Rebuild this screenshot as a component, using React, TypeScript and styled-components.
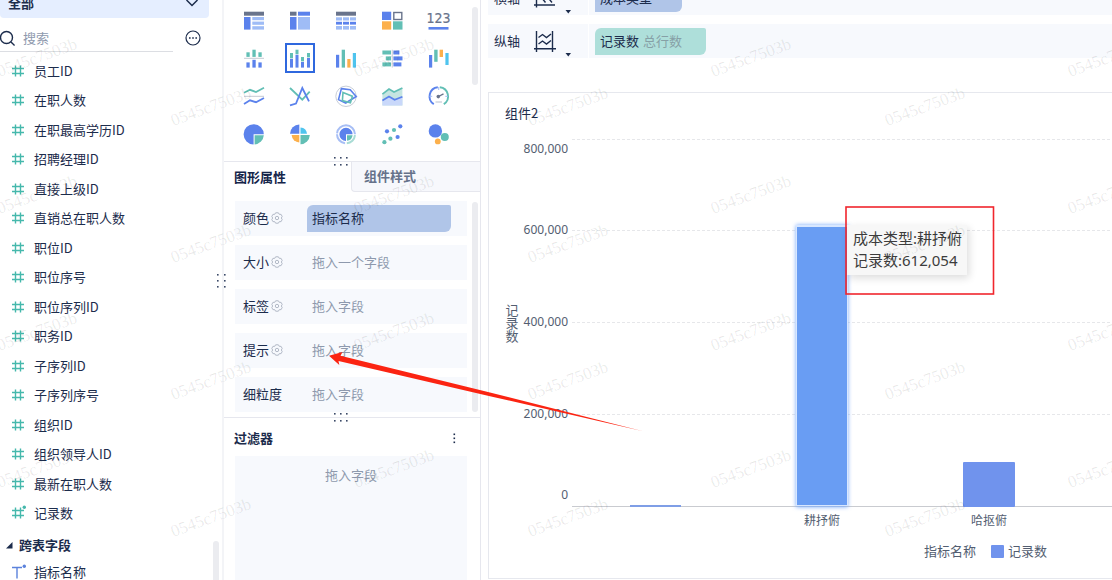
import React from "react";
import styled, { createGlobalStyle } from "styled-components";

const BLUE = "#5b82ec";
const LIGHT = "#9fbcf6";
const TEAL = "#62bfb5";
const ORANGE = "#fcb04c";
const CYAN = "#4fc4ee";
const GRAY = "#69748c";
const INK = "#1c2c4c";

const Global = createGlobalStyle`
  * { box-sizing: border-box; }
  body {
    margin: 0;
    background: #fff;
    color: ${INK};
    font-family: "Noto Sans CJK SC", sans-serif;
    font-size: 13px;
    line-height: 20px;
  }
  button, input { font: inherit; color: inherit; border: 0; background: none; padding: 0; }
  ul { list-style: none; margin: 0; padding: 0; }
  h2, h3, p { margin: 0; font-size: 13px; font-weight: 700; }
`;

const Page = styled.div`
  position: relative;
  display: flex;
  height: 100vh;
  overflow: hidden;
`;

const FieldPanel = styled.aside`
  position: relative;
  flex: 0 0 222px;
  overflow: hidden;
`;

const TableSelect = styled.button`
  display: flex;
  align-items: center;
  justify-content: space-between;
  width: 209px;
  height: 30px;
  margin-top: -12px;
  padding: 0 10px 0 8px;
  border-radius: 4px;
  background: #e5eeff;
  font-weight: 700;
`;

const SearchRow = styled.div`
  display: flex;
  align-items: center;
  gap: 12px;
  height: 40px;
`;

const SearchLabel = styled.label`
  display: flex;
  align-items: center;
  gap: 8px;
  width: 173px;
  height: 28px;
  border-bottom: 1px solid #dcdee3;
`;

const SearchInput = styled.input`
  flex: 1;
  min-width: 0;
  outline: 0;
  &::placeholder { color: #8f9aae; opacity: 1; }
`;

const IconButton = styled.button`
  display: flex;
  align-items: center;
  justify-content: center;
`;

const FieldList = styled.ul`
  display: grid;
  grid-auto-rows: 1fr;
  height: 472px;
  margin-top: -2px;
`;

const Field = styled.li`
  display: flex;
  align-items: center;
  gap: 7px;
  padding-left: 10px;
`;

const GroupTitle = styled.h3`
  display: flex;
  align-items: center;
  gap: 6px;
  height: 24px;
  margin-top: 5px;
  padding-left: 6px;
`;

const LastField = styled.div`
  display: flex;
  align-items: center;
  gap: 7px;
  height: 30px;
  padding-left: 10px;
`;

const Thumb = styled.div<{ $top: number; $height: number; $right: number }>`
  position: absolute;
  top: ${(p) => p.$top}px;
  right: ${(p) => p.$right}px;
  width: 6px;
  height: ${(p) => p.$height}px;
  border-radius: 3px;
  background: #ebecf0;
`;

const ConfigPanel = styled.section`
  position: relative;
  flex: 0 0 259px;
  display: flex;
  flex-direction: column;
  border-left: 2px solid #f3f4f7;
  border-right: 1px solid #e6e7ee;
`;

const SideGrip = styled.div`
  position: absolute;
  z-index: 2;
  left: -8px;
  top: 273px;
  display: flex;
`;

const ChartTypes = styled.div`
  position: relative;
  display: grid;
  grid-template-columns: repeat(5, 46px);
  grid-auto-rows: 38px;
  place-items: center;
  height: 162px;
  align-content: start;
  padding: 1px 0 0 7px;
  border-bottom: 1px solid #e6e7ee;
`;

const ChartType = styled.button<{ $active?: boolean }>`
  display: flex;
  align-items: center;
  justify-content: center;
  width: 30px;
  height: 30px;
  border: ${(p) => (p.$active ? "2px solid #2f68de" : "0")};
`;

const Grip = styled.div`
  position: absolute;
  z-index: 2;
  left: 50%;
  bottom: -5px;
  display: flex;
  margin-left: -19px;
`;

const Tabs = styled.div`
  display: flex;
  height: 30px;
`;

const Tab = styled.button<{ $active?: boolean }>`
  flex: ${(p) => (p.$active ? "0 0 127px" : "1")};
  padding: 0 0 1px ${(p) => (p.$active ? 10 : 12)}px;
  text-align: left;
  font-weight: 700;
  color: ${(p) => (p.$active ? "#15254a" : "#66728a")};
  background: ${(p) => (p.$active ? "#fff" : "#f7f8fc")};
  border: ${(p) => (p.$active ? "0" : "1px solid #e6e7ee")};
  border-top: 0;
  border-right: 0;
  border-bottom-left-radius: 4px;
`;

const Attributes = styled.div`
  position: relative;
  display: flex;
  flex-direction: column;
  gap: 9px;
  height: 226px;
  padding: 9px 13px 0 11px;
  border-bottom: 1px solid #e6e7ee;
`;

const Attribute = styled.div`
  display: flex;
  align-items: center;
  height: 35px;
  padding: 0 16px 1px 8px;
  background: #f7f9fd;
`;

const AttributeName = styled.div`
  display: flex;
  align-items: center;
  gap: 2px;
  flex: 0 0 64px;
`;

const Chip = styled.span<{ $tone: string; $grow?: boolean; $end?: number }>`
  display: flex;
  align-items: center;
  gap: 4px;
  flex: ${(p) => (p.$grow ? "1" : "none")};
  height: 27px;
  padding: 0 ${(p) => p.$end ?? 24}px 0 5px;
  border-radius: 6px 2px 6px 0;
  background: ${(p) => p.$tone};
`;

const Hint = styled.span`
  padding-left: 5px;
  color: #8e99ad;
`;

const FilterHead = styled.div`
  display: flex;
  align-items: center;
  justify-content: space-between;
  height: 38px;
  padding: 2px 21px 0 10px;
`;

const FilterDrop = styled.div`
  flex: 1;
  margin: 0 13px 0 11px;
  padding: 9px;
  text-align: center;
  color: #8e99ad;
  background: #f7f9fd;
`;

const Main = styled.main`
  flex: 1;
  min-width: 0;
  display: flex;
  flex-direction: column;
  padding: 0 0 1px 7px;
`;

const AxisRows = styled.div`
  display: flex;
  flex-direction: column;
  gap: 9px;
  margin: -19px 0 34px;
`;

const AxisRow = styled.div`
  display: grid;
  grid-template-columns: 100px 1fr;
  gap: 1px;
  height: 34px;
`;

const AxisName = styled.div`
  display: flex;
  align-items: center;
  gap: 13px;
  padding-left: 6px;
  background: #f7f9fd;
`;

const AxisDrop = styled.div`
  display: flex;
  align-items: center;
  padding-left: 6px;
  background: #f7f9fd;
`;

const Muted = styled.span`
  color: #86a0a6;
`;

const ChartCard = styled.section`
  position: relative;
  flex: 1;
  display: flex;
  flex-direction: column;
  border: 1px solid #e6e8ee;
  border-right: 0;
`;

const ChartTitle = styled.h2`
  height: 30px;
  padding: 10px 0 0 16px;
  font-weight: 400;
`;

const Plot = styled.svg`
  display: block;
  width: 100%;
  height: 410px;
  text { fill: #535e71; font-size: 12px; }
  .value { font-family: "Noto Sans", sans-serif; text-anchor: end; }
  .category { text-anchor: middle; }
  .axis { font-size: 13px; writing-mode: vertical-rl; }
`;

const Legend = styled.div`
  display: flex;
  align-items: center;
  gap: 4px;
  padding: 8px 0 0 435px;
  color: #535e71;
`;

const LegendTitle = styled.span`
  margin-right: 11px;
`;

const Swatch = styled.i`
  width: 13px;
  height: 13px;
  border-radius: 1px;
  background: #7093ed;
`;

const Tooltip = styled.div`
  position: absolute;
  left: 358px;
  top: 132px;
  width: 120px;
  padding: 2px 0 4px 6px;
  background: rgba(247, 247, 247, 0.96);
  box-shadow: 2px 3px 8px rgba(0, 0, 0, 0.14);
  color: #3c3c3c;
  font: 15px/22px "Noto Sans", "Noto Sans CJK SC", sans-serif;
  white-space: nowrap;
`;

const Overlay = styled.svg`
  position: absolute;
  inset: 0;
  width: 100%;
  height: 100%;
  pointer-events: none;
  z-index: 5;
`;

const HashIcon = ({ calculated }: { calculated?: boolean }) => (
  <svg width="17" height="16" viewBox="0 0 17 16" fill="none" stroke="#45b8ac" strokeWidth="1.4" aria-hidden>
    <path d="M5.5 2.5v11M10.5 2.5v11M2 5.5h12M2 10.5h12" />
    {calculated && <circle cx="14.3" cy="2.3" r="1.7" fill="#45b8ac" stroke="none" />}
  </svg>
);

const TextIcon = () => (
  <svg width="17" height="16" viewBox="0 0 17 16" fill="none" stroke="#5b82dc" strokeWidth="1.4" aria-hidden>
    <path d="M2 3.5h10M7 3.5v11" />
    <circle cx="14.3" cy="2.3" r="1.7" fill="#5b82dc" stroke="none" />
  </svg>
);

const GearIcon = () => (
  <svg width="12" height="12" viewBox="0 0 12 12" fill="none" stroke="#b3bac7" aria-hidden>
    <path d="M4.6.8h2.8l.8 1.500 1.900.1 1.100 2.100L10.300 6l.9 1.500-1.100 2.100-1.900.1-.8 1.500H4.600l-.8-1.500-1.900-.1L.8 7.500 1.700 6 .8 4.500l1.100-2.100 1.900-.1z" strokeLinejoin="round" />
    <circle cx="6" cy="6" r="1.7" />
  </svg>
);

const GripDots = ({ vertical }: { vertical?: boolean }) => {
  const long = [1, 7, 13];
  const short = [1, 8];
  return (
    <svg width={vertical ? 10 : 15} height={vertical ? 15 : 10} fill="#3b4a68" aria-hidden>
      {long.map((a) => short.map((b) => (
        <rect key={`${a}-${b}`} x={vertical ? b : a} y={vertical ? a : b} width="1.6" height="1.6" />
      )))}
    </svg>
  );
};

const R = ({ b, f }: { b: number[]; f: string }) => (
  <rect x={b[0]} y={b[1]} width={b[2] - b[0]} height={b[3] - b[1]} fill={f} />
);

const chartTypes: { name: string; art: React.ReactNode }[] = [
  { name: "分组表", art: <><R b={[0, 1.7, 20, 5.7]} f={GRAY} /><R b={[0, 7, 6.5, 19.6]} f={BLUE} /><R b={[8.3, 7, 20, 10.2]} f={LIGHT} /><R b={[8.3, 11.6, 20, 14.8]} f={LIGHT} /><R b={[8.3, 16.2, 20, 19.6]} f={LIGHT} /></> },
  { name: "交叉表", art: <><R b={[0, 1.7, 6.5, 5.7]} f={GRAY} /><R b={[8, 1.7, 20, 5.7]} f={BLUE} /><R b={[0, 7, 6.5, 19.6]} f={BLUE} /><R b={[8, 7, 20, 19.6]} f={LIGHT} /></> },
  { name: "明细表", art: <><R b={[0, 1.7, 20, 5.7]} f={GRAY} />{[0, 7, 14].map((x) => <g key={x}><R b={[x, 7.3, x + 6, 10.5]} f={LIGHT} /><R b={[x, 11.8, x + 6, 14.6]} f={BLUE} /><R b={[x, 16, x + 6, 19.6]} f={LIGHT} /></g>)}</> },
  { name: "颜色表格", art: <><R b={[0, 1.7, 9.2, 10]} f={BLUE} /><rect x="11.8" y="2.5" width="8" height="7" fill="none" stroke={GRAY} strokeWidth="1.4" /><R b={[0, 11.3, 9.2, 19.6]} f={ORANGE} /><R b={[11, 11.3, 20.5, 19.6]} f={TEAL} /></> },
  { name: "KPI指标卡", art: <><text x="10.5" y="13" textAnchor="middle" fill={GRAY} stroke={GRAY} strokeWidth="0.2" fontSize="14" fontFamily="'Liberation Sans Narrow', 'DejaVu Sans Condensed', sans-serif">123</text><R b={[0.5, 17, 20.5, 19.6]} f={BLUE} /></> },
  { name: "对比柱状图", art: <><R b={[0, 9.8, 20, 10.8]} f="#c5cad3" />{[[2.4, 4.3, 14.4], [8.4, 1.7, 11.8], [14.4, 4.3, 14.4]].map(([x, t, u]) => <g key={x}><R b={[x, t, x + 3.3, 8.9]} f={TEAL} /><R b={[x, u, x + 3.3, 19.6]} f={BLUE} /></g>)}</> },
  { name: "堆积柱状图", art: <>{[[0, 5, 10.8], [5.5, 1.7, 6.8], [11, 9, 14], [17, 5, 10]].map(([x, t, u]) => <g key={x}><R b={[x, t, x + 3, u - 0.6]} f={TEAL} /><R b={[x, u, x + 3, 19.6]} f={BLUE} /></g>)}</> },
  { name: "分区柱形图", art: <><R b={[0, 6.8, 3.2, 19.6]} f={BLUE} /><R b={[5.7, 1.7, 9, 19.6]} f={TEAL} /><R b={[11.3, 11, 14.5, 19.6]} f={ORANGE} /><R b={[16.8, 5, 20, 19.6]} f={CYAN} /></> },
  { name: "对比条形图", art: <><R b={[9.8, 1.7, 10.6, 19.6]} f="#b9c0cb" /><R b={[0.4, 2.5, 9, 6.5]} f={TEAL} /><R b={[3.8, 8.4, 9, 12.4]} f={TEAL} /><R b={[0.4, 14.4, 9, 18.4]} f={TEAL} /><R b={[11.4, 2.5, 17.4, 6.5]} f={BLUE} /><R b={[11.4, 8.4, 20.5, 12.4]} f={BLUE} /><R b={[11.4, 14.4, 19.4, 18.4]} f={BLUE} /></> },
  { name: "瀑布图", art: <><R b={[1, 7, 4.2, 19.6]} f={BLUE} /><R b={[6.2, 1.7, 9.6, 13.8]} f={TEAL} /><R b={[11.6, 1.7, 15, 9]} f={ORANGE} /><R b={[17.4, 5, 20.6, 17]} f={CYAN} /></> },
  { name: "折线图", art: <g fill="none" strokeWidth="1.8"><path d="M0 6.7L6 3.8l6 2.2 8-4.2" stroke={TEAL} /><path d="M0 10.3h20" stroke="#c5cad3" strokeWidth="1" /><path d="M0 18l6-3.7 6 1.9 8-4.2" stroke={BLUE} /></g> },
  { name: "多系列折线图", art: <g fill="none" strokeWidth="1.8"><path d="M0 2l12.3 11.7 7.4-8" stroke={TEAL} /><path d="M0 19.4l6-1.9L12.3 2 19 15.4" stroke={BLUE} /></g> },
  { name: "雷达图", art: <g fill="none" strokeWidth="1.6"><circle cx="10" cy="10.3" r="10.2" stroke="#c8ced8" strokeWidth="1" /><path d="M5.4 2.6l8.8 1.2 6 6.7L9.7 17l-7.2-3.4z" stroke={BLUE} /><path d="M7 6.4l9.4 3.8-2 6.6-8-2.2z" stroke={TEAL} /></g> },
  { name: "面积图", art: <><path d="M.4 8.2L7 3l5 3 8.4-4v17.6H.4z" fill="#c6e5e1" /><path d="M.4 14.4L7 10.6l5.6 3.2 7.8-3v8.8H.4z" fill="#c9d8fa" /><path d="M.4 8.2L7 3l5 3 8.4-4" fill="none" stroke={TEAL} strokeWidth="1.7" /><path d="M.4 14.4L7 10.6l5.6 3.2 7.8-3" fill="none" stroke={BLUE} strokeWidth="1.7" /></> },
  { name: "仪表盘", art: <g fill="none" strokeWidth="1.9"><path d="M5.8 18.1A9.2 9.2 0 0 1 9.8 1.2" stroke={BLUE} /><path d="M11.8 1.2a9.2 9.2 0 0 1 4 16.9" stroke={TEAL} /><path d="M10.7 1v3M1.5 10.3h2.7M17.3 10.3H20" stroke="#9fbcf6" strokeWidth="1" /><path d="M10.5 10.5l5-2.6" stroke={GRAY} strokeWidth="1.3" /><circle cx="10.3" cy="10.6" r="1.8" fill={GRAY} stroke="none" /><path d="M7.5 16h6.5" stroke="#d3d8e0" strokeWidth="1.6" /></g> },
  { name: "饼图", art: <><path d="M9.6 10.3H19.8A10.1 10.1 0 1 0 9.6 20.4z" fill={BLUE} /><path d="M10.6 11.2h9.2a10 10 0 0 1-9.2 9.2z" fill={TEAL} /></> },
  { name: "玫瑰图", art: <><path d="M9.3 9.8H0A9.5 9.5 0 0 1 9.3.5z" fill={BLUE} /><path d="M10.5 9.8V3.6a7 7 0 0 1 6.5 6.2z" fill={CYAN} /><path d="M10.5 11h9.3a9.6 9.6 0 0 1-9.3 9.3z" fill={TEAL} /><path d="M9.3 11v7.4A8 8 0 0 1 1.6 11z" fill={ORANGE} /></> },
  { name: "多层饼图", art: <><path d="M10 1.3a9 9 0 1 0 0 18" fill="none" stroke="#a7bef5" strokeWidth="2" strokeDasharray="13 1" /><path d="M10 1.3a9 9 0 0 1 9 9" fill="none" stroke="#a7bef5" strokeWidth="2" /><path d="M19 11.2a9 9 0 0 1-8.2 8.1" fill="none" stroke="#a9dcd5" strokeWidth="2" /><path d="M10 10.3h6.6A6.6 6.6 0 1 0 10 16.9z" fill={BLUE} /><path d="M11 11.2h5.6a6.4 6.4 0 0 1-5.6 5.6z" fill={TEAL} /></> },
  { name: "散点图", art: <>{[[5, 7.3], [18.3, 2.3], [15.6, 13]].map(([x, y]) => <circle key={x} cx={x} cy={y} r="2.1" fill={BLUE} />)}{[[12, 6], [8.4, 14.7], [2.4, 18.2]].map(([x, y]) => <circle key={x} cx={x} cy={y} r="2.1" fill={TEAL} />)}</> },
  { name: "气泡图", art: <><circle cx="7.4" cy="6.9" r="6.7" fill={BLUE} /><circle cx="16.8" cy="13" r="4" fill={TEAL} /><circle cx="9.8" cy="17.4" r="2.9" fill={ORANGE} /></> },
];

const fields = ["员工ID", "在职人数", "在职最高学历ID", "招聘经理ID", "直接上级ID", "直销总在职人数", "职位ID", "职位序号", "职位序列ID", "职务ID", "子序列ID", "子序列序号", "组织ID", "组织领导人ID", "最新在职人数", "记录数"];

const attributes = [
  { name: "颜色", chip: "指标名称", gear: true },
  { name: "大小", hint: "拖入一个字段", gear: true },
  { name: "标签", hint: "拖入字段", gear: true },
  { name: "提示", hint: "拖入字段", gear: true },
  { name: "细粒度", hint: "拖入字段", gear: false },
];

const AxisIcon = ({ horizontal }: { horizontal?: boolean }) => (
  <svg width="37" height="30" viewBox="0 0 37 30" overflow="visible" fill="none" stroke={INK} strokeWidth="1.4" aria-hidden>
    {horizontal
      ? <path d="M3.500 2v22.500M1 22h21M1 4.500h21M8 6l3 4.500-3 3.500 4.500 5.500M14.500 6l3 4.500-3 3.500 4.500 5.500" />
      : <path d="M3.500 5v21M19.500 5v21M1 22.700h22M5.500 11.500l4-3 4 3 4.500-3.500M5.500 18l4-3 4 3 4.500-3.500" />}
    <path d="M32.500 27H38l-2.700 3.400z" fill={INK} stroke="none" />
  </svg>
);

const values = [
  { label: "800,000", text: 30, line: 17 },
  { label: "600,000", text: 111, line: 108 },
  { label: "400,000", text: 203, line: 200 },
  { label: "200,000", text: 295, line: 292 },
  { label: "0", text: 376, line: 0 },
];

const marks: number[][] = [];
for (let row = 0; row < 4; row += 1) {
  for (let col = 0; col < 4; col += 1) {
    marks.push([37 + col * 357, 58 + row * 137]);
    if (col < 3) marks.push([211 + col * 357, 107 + row * 137]);
  }
}

export default function App() {
  return (
    <>
      <Global />
      <Page>
        <FieldPanel>
          <TableSelect>
            全部
            <svg width="14" height="10" fill="none" stroke={INK} strokeWidth="1.5" aria-hidden><path d="M1.5 2L7 7.5 12.500 2" /></svg>
          </TableSelect>
          <SearchRow>
            <SearchLabel>
              <svg width="15" height="16" fill="none" stroke={INK} strokeWidth="1.4" aria-hidden><circle cx="6.500" cy="7.500" r="6" /><path d="M11 12l3.600 3.500" /></svg>
              <SearchInput aria-label="搜索" placeholder="搜索" />
            </SearchLabel>
            <IconButton aria-label="更多">
              <svg width="16" height="16" fill="none" stroke={INK} strokeWidth="1.2" aria-hidden><circle cx="8" cy="8" r="7" /><path d="M4 8h1.600M7.200 8h1.600M10.400 8H12" strokeWidth="1.600" /></svg>
            </IconButton>
          </SearchRow>
          <FieldList>
            {fields.map((f) => <Field key={f}><HashIcon calculated={f === "记录数"} />{f}</Field>)}
          </FieldList>
          <GroupTitle>
            <svg width="7" height="7" aria-hidden><path d="M6.500 0v6.500H0z" fill={INK} /></svg>
            跨表字段
          </GroupTitle>
          <LastField><TextIcon />指标名称</LastField>
          <Thumb $top={541} $height={60} $right={3} />
        </FieldPanel>

        <ConfigPanel>
          <SideGrip><GripDots vertical /></SideGrip>
          <ChartTypes>
            {chartTypes.map((t, i) => (
              <ChartType key={t.name} $active={i === 6} aria-label={t.name}>
                <svg width="21" height="21" viewBox="0 0 21 21" overflow="visible" aria-hidden>{t.art}</svg>
              </ChartType>
            ))}
            <Thumb $top={7} $height={78} $right={2} />
            <Grip><GripDots /></Grip>
          </ChartTypes>
          <Tabs>
            <Tab $active>图形属性</Tab>
            <Tab>组件样式</Tab>
          </Tabs>
          <Attributes>
            {attributes.map((a) => (
              <Attribute key={a.name}>
                <AttributeName>{a.name}{a.gear && <IconButton aria-label={`${a.name}设置`}><GearIcon /></IconButton>}</AttributeName>
                {a.chip ? <Chip $tone="#b0c5e8" $grow>{a.chip}</Chip> : <Hint>{a.hint}</Hint>}
              </Attribute>
            ))}
            <Thumb $top={10} $height={210} $right={2} />
            <Grip><GripDots /></Grip>
          </Attributes>
          <FilterHead>
            <h3>过滤器</h3>
            <IconButton aria-label="过滤器菜单">
              <svg width="9" height="12" fill={INK} aria-hidden><rect x="3.500" y="1.500" width="1.600" height="1.600" /><rect x="3.500" y="5.500" width="1.600" height="1.600" /><rect x="3.500" y="9.500" width="1.600" height="1.600" /></svg>
            </IconButton>
          </FilterHead>
          <FilterDrop>拖入字段</FilterDrop>
        </ConfigPanel>

        <Main>
          <AxisRows>
            <AxisRow>
              <AxisName>横轴<AxisIcon horizontal /></AxisName>
              <AxisDrop><Chip $tone="#b0c5e8" $end={30}>成本类型</Chip></AxisDrop>
            </AxisRow>
            <AxisRow>
              <AxisName>纵轴<AxisIcon /></AxisName>
              <AxisDrop><Chip $tone="#aedfda">记录数<Muted>总行数</Muted></Chip></AxisDrop>
            </AxisRow>
          </AxisRows>
          <ChartCard>
            <ChartTitle>组件2</ChartTitle>
            <Plot role="img" aria-label="记录数柱状图">
              <defs>
                <filter id="glow" x="-20%" y="-5%" width="140%" height="110%"><feGaussianBlur stdDeviation="2" /></filter>
              </defs>
              {values.map((v) => (
                <g key={v.label}>
                  <text className="value" x="79" y={v.text}>{v.label}</text>
                  {v.line > 0 && <line x1="83" x2="100%" y1={v.line - 0.5} y2={v.line - 0.5} stroke="#e6e7ea" strokeDasharray="3 2" />}
                </g>
              ))}
              <text className="axis" x="23" y="181">记录数</text>
              <line x1="83" x2="100%" y1="383.500" y2="383.500" stroke="#c9cbd0" />
              <rect x="141" y="382" width="51" height="2" fill="#7f9ee6" />
              <rect x="307" y="102" width="52" height="282" fill="#77a9fa" filter="url(#glow)" />
              <rect x="307" y="102" width="52" height="281" fill="#d8e7ff" />
              <rect x="308" y="104" width="50" height="278" fill="#699df3" />
              <rect x="474" y="339" width="52" height="45" rx="1" fill="#7093ed" />
              <text className="category" x="333" y="402">耕抒俯</text>
              <text className="category" x="500" y="402">哈抠俯</text>
            </Plot>
            <Legend>
              <LegendTitle>指标名称</LegendTitle><Swatch />记录数
            </Legend>
            <Tooltip>
              <div>成本类型:耕抒俯</div>
              <div>记录数:612,054</div>
            </Tooltip>
          </ChartCard>
        </Main>

        <Overlay aria-hidden>
          <g fill="#000" fillOpacity="0.09" fontFamily="'Liberation Serif', serif" fontSize="17" textAnchor="middle">
            {marks.map(([x, y]) => (
              <text key={`${x}-${y}`} transform={`translate(${x} ${y}) rotate(-20)`} y="5">0545c7503b</text>
            ))}
          </g>
          <rect x="846" y="207" width="147.500" height="87" fill="none" stroke="#f0262d" strokeWidth="1.600" />
          <path d="M329 355.700L342.500 352l-2 3.700L490 392.500 642 431 490 396.200 338.500 361l.8 4z" fill="#fb2412" />
        </Overlay>
      </Page>
    </>
  );
}
